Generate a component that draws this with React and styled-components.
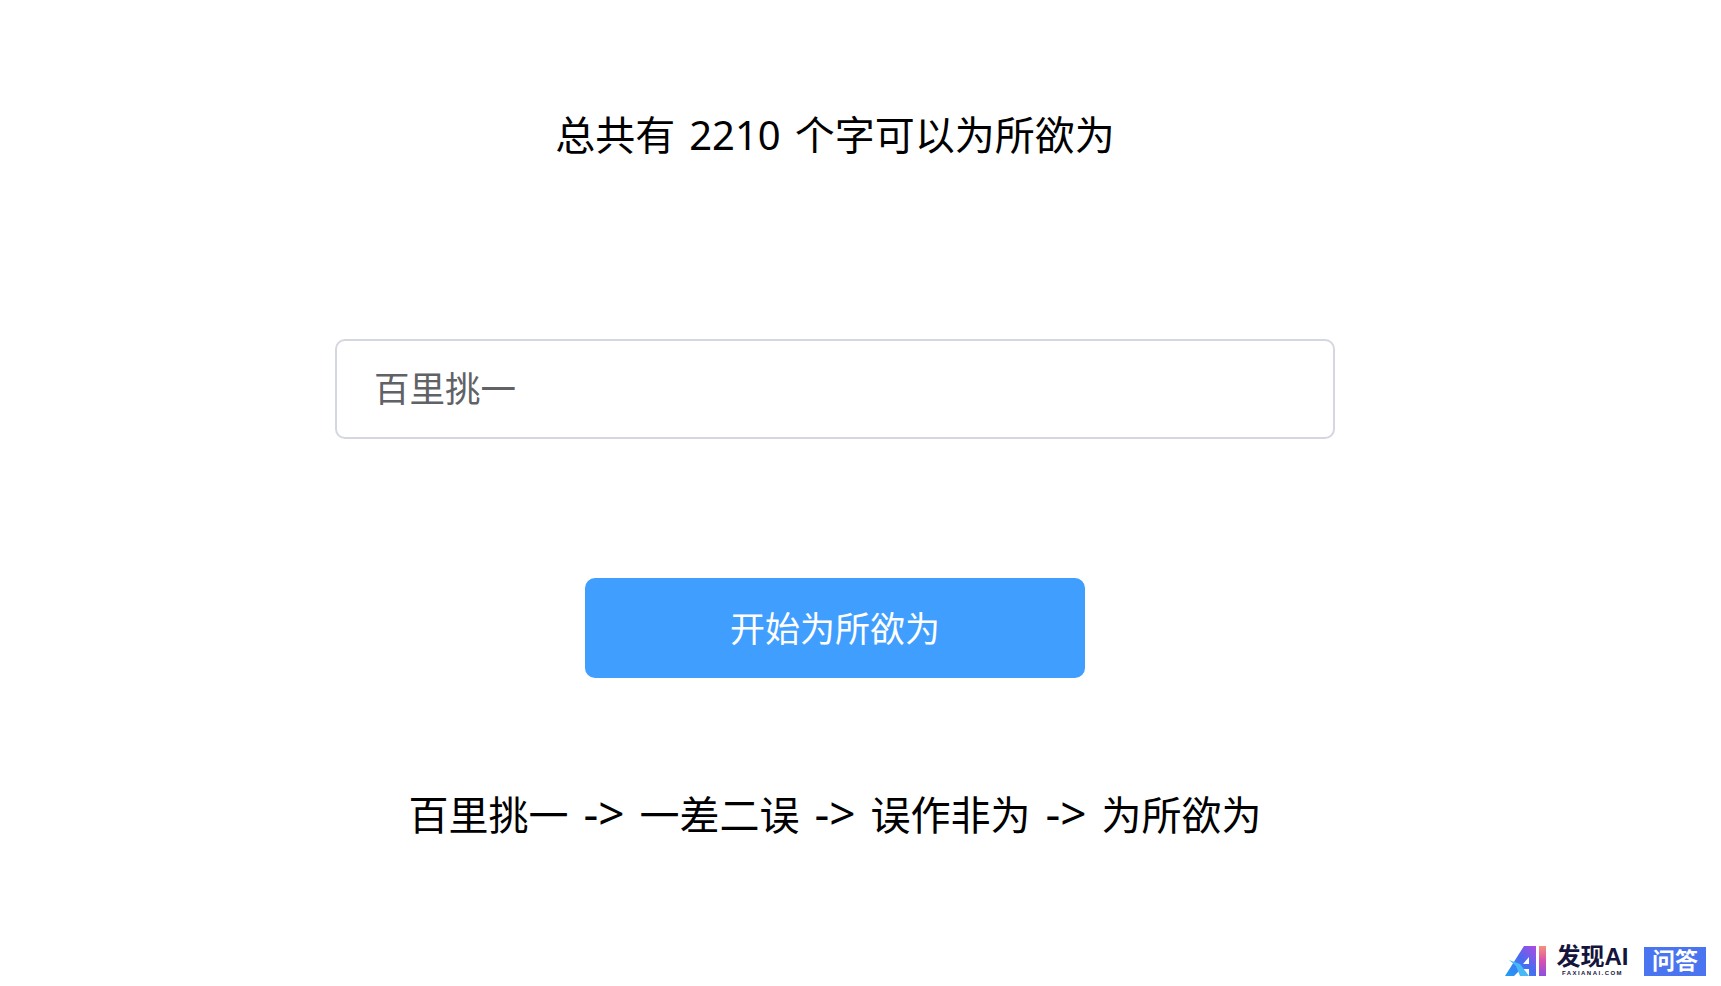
import React from "react";
import styled, { createGlobalStyle } from "styled-components";

const Global = createGlobalStyle`
  html, body { margin: 0; padding: 0; background: #fff; }
  body { font-family: "Noto Sans", "Noto Sans CJK SC", sans-serif; }
`;

const Page = styled.main`
  width: 1721px;
  height: 986px;
  position: relative;
  overflow: hidden;
  display: flex;
  flex-direction: column;
  align-items: center;
  padding: 105px 51px 0 0;
  box-sizing: border-box;
`;

const Title = styled.h1`
  margin: 0;
  height: 60px;
  line-height: 60px;
  font-size: 40px;
  font-weight: 400;
  color: #000;
  word-spacing: 3.5px;
`;

const Input = styled.input`
  margin-top: 174px;
  width: 1000px;
  height: 100px;
  box-sizing: border-box;
  border: 2px solid #d4d7e0;
  border-radius: 10px;
  padding: 0 37px 6px;
  font: 400 35.5px "Noto Sans CJK SC", sans-serif;
  outline: none;
  background: #fff;
  &::placeholder { color: #606266; opacity: 1; }
`;

const Button = styled.button`
  margin-top: 139px;
  width: 500px;
  height: 100px;
  border: 0;
  border-radius: 10px;
  padding: 0 0 4px;
  background: #409eff;
  color: #fff;
  font: 400 35px "Noto Sans CJK SC", sans-serif;
`;

const Chain = styled.p`
  margin: 104px 0 0;
  line-height: 60px;
  font-size: 40px;
  color: #000;
  word-spacing: 4.5px;
`;

const Arrow = styled.span`
  font-size: 46px;
`;

const Badge = styled.div`
  position: absolute;
  right: 15px;
  bottom: 10px;
  display: flex;
  align-items: flex-end;
`;

const BrandText = styled.div`
  margin-left: 10px;
  width: 73px;
  display: flex;
  flex-direction: column;
  align-items: center;
  color: #14143c;
`;

const BrandName = styled.span`
  font-family: "Liberation Sans", "Noto Sans CJK SC", sans-serif;
  font-size: 24px;
  line-height: 22px;
  font-weight: 700;
  white-space: nowrap;
`;

const BrandUrl = styled.span`
  margin-top: 3px;
  font-size: 6px;
  line-height: 5px;
  font-weight: 700;
  letter-spacing: 1.45px;
  white-space: nowrap;
  font-family: "Liberation Sans", sans-serif;
`;

const Tag = styled.span`
  margin-left: 15px;
  width: 62px;
  height: 29px;
  background: #4a74f0;
  color: #fff;
  font-size: 23px;
  line-height: 26px;
  font-weight: 700;
  text-align: center;
`;

const LogoMark = () => (
  <svg width="41" height="30" viewBox="0 0 41 30" aria-hidden="true">
    <defs>
      <linearGradient id="a" x1="0" y1="1" x2="1" y2="0">
        <stop offset="0" stopColor="#1ea0f5" />
        <stop offset="0.55" stopColor="#4a6af0" />
        <stop offset="1" stopColor="#b04ae0" />
      </linearGradient>
      <linearGradient id="i" x1="0" y1="0" x2="0" y2="1">
        <stop offset="0" stopColor="#f79078" />
        <stop offset="0.5" stopColor="#d84fb0" />
        <stop offset="1" stopColor="#8a50e0" />
      </linearGradient>
    </defs>
    <path fillRule="evenodd" d="M19 0H31V30H24V23H16L9 30H0ZM24 11L18 18H24Z" fill="url(#a)" />
    <path d="M4 14L15 18L24 30H15L11 20Z" fill="#49b8f7" />
    <rect x="34" y="0" width="7" height="30" fill="url(#i)" />
  </svg>
);

export default function App() {
  return (
    <Page>
      <Global />
      <Title>总共有 2210 个字可以为所欲为</Title>
      <Input placeholder="百里挑一" />
      <Button>开始为所欲为</Button>
      <Chain>
        百里挑一 <Arrow>-&gt;</Arrow> 一差二误 <Arrow>-&gt;</Arrow> 误作非为 <Arrow>-&gt;</Arrow> 为所欲为
      </Chain>
      <Badge>
        <LogoMark />
        <BrandText>
          <BrandName>发现AI</BrandName>
          <BrandUrl>FAXIANAI.COM</BrandUrl>
        </BrandText>
        <Tag>问答</Tag>
      </Badge>
    </Page>
  );
}
